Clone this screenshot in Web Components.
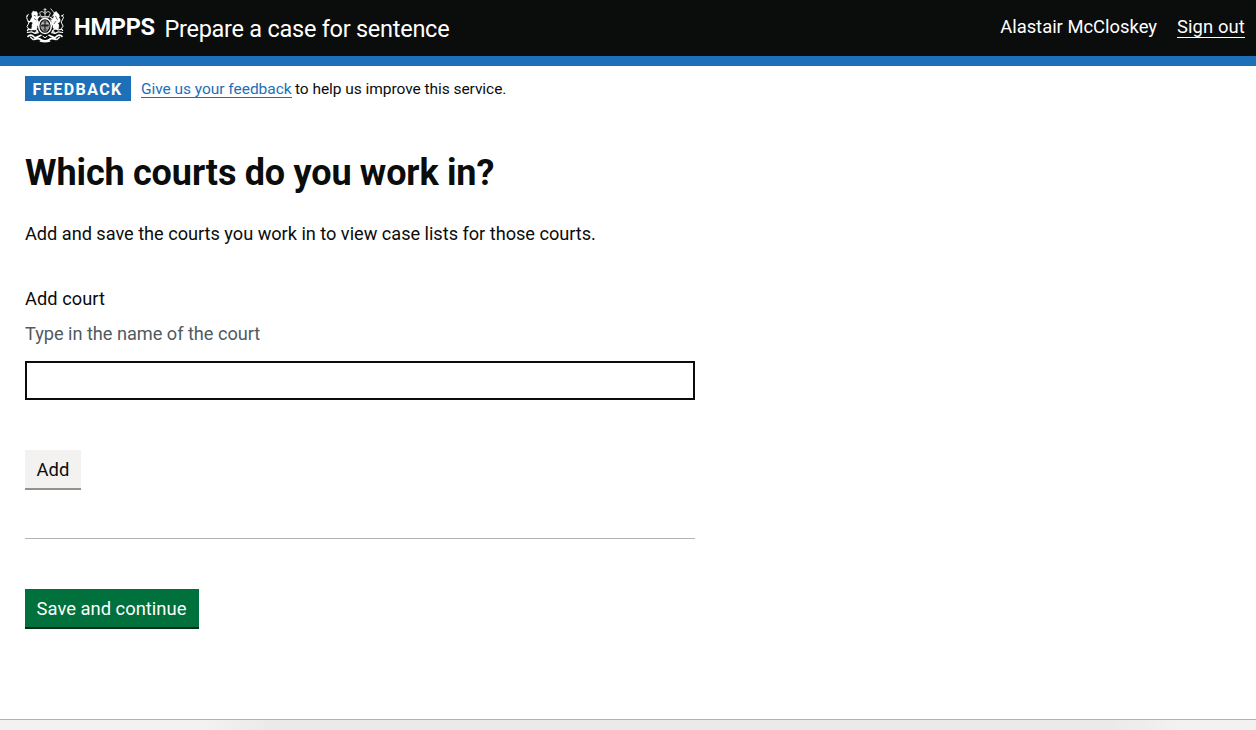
<!DOCTYPE html>
<html lang="en">
<head>
<meta charset="utf-8">
<title>Prepare a case for sentence</title>
<style>
  html, body { margin: 0; height: 100%; }
  body { background: #fff; color: #0b0c0c; font-family: Roboto, "Noto Sans", sans-serif; overflow: hidden; }
</style>
</head>
<body>
<court-page>
  <service-header slot="header" organisation="HMPPS" service="Prepare a case for sentence" user="Alastair McCloskey"></service-header>
  <phase-banner slot="banner" tag="Feedback"></phase-banner>
  <court-form></court-form>
  <page-footer slot="footer"></page-footer>
</court-page>

<script>
const define = (name, markup, ready) => customElements.define(name, class extends HTMLElement {
  connectedCallback() {
    if (this.shadowRoot) return;
    const template = document.createElement('template');
    template.innerHTML = markup;
    const root = this.attachShadow({ mode: 'open' });
    root.append(template.content.cloneNode(true));
    if (ready) ready(this, root);
  }
});

define('royal-crest', `
<style>:host { display: block; width: 40px; height: 35px; flex: none } svg { display: block }</style>
<svg width="40" height="35" viewBox="0 0 40 35" fill="none" stroke="#fff" stroke-linecap="round" stroke-linejoin="round" aria-hidden="true">
  <!-- crown -->
  <path d="M20 .5v3M18.8 1.7h2.4" stroke-width=".8"/>
  <path d="M16.2 8.4 14.6 5.2Q15.2 3.2 17.4 3.7Q19.4 4.2 20 5.8Q20.6 4.2 22.6 3.7Q24.8 3.2 25.4 5.2L23.8 8.4M20 3.6v4.4" stroke-width=".8"/>
  <path d="M16 8.9h8" stroke-width="1.2"/>
  <!-- shield within the garter -->
  <ellipse cx="20" cy="18" rx="6.3" ry="7.6" stroke-width="1.5"/>
  <ellipse cx="20" cy="18" rx="4.1" ry="5.3" stroke-width=".5" fill="#666"/>
  <path d="M20 13v10M16.4 17.6h7.2" stroke="#0b0c0c" stroke-width=".8"/>
  <path d="M17.4 15.2h1.5M21.2 15.2h1.5M17.6 20h1.2M21.2 20h1.2" stroke-width=".8"/>
  <!-- lion -->
  <path d="M6.8 5.2 8.2 3l1.7.8 1.5-.3 1.3 2-.4 1.8.8 2.4-.5 2.1 1.3 2.4-.2 2.4-1.5 1.5-.2 2.4-2.3 1.5-2.8-.2-.2-2.4 1.5-2.8-.8-2.1-2.1-1.5.8-2.4 1-1.4z" fill="#fff" stroke-width=".5"/>
  <path d="M6.3 12.8 4.3 14 3.2 13.3M12.5 10l1.8-1.8M9 15l-1.8 2.2 3.4 2.1-3.9 2.4-3.5-.6-.7 1.6M10.5 21l2.3 2.2-2.2 1.1" stroke-width="1.4"/>
  <path d="M3.3 20.6Q.7 18.4 3.2 16.3Q5.1 14.3 2.4 11.9Q.8 9.6 2.6 7.2M1.3 8.3 3.4 6.5" stroke-width="1"/>
  <path d="M9.2 7.4l1.4.6M9.4 10.7l1.8 1.2" stroke="#0b0c0c" stroke-width=".6"/>
  <!-- unicorn -->
  <path d="M25.8.8 29.3 5" stroke-width=".8"/>
  <path d="M28.1 7.2 29.3 4.5l2-1.1.8 1.3 1.6 1.3.9 2.3-.6 1.2 1.4 2.6-1 2.2-1.8 1.1 1.3 2.5-.4 2.9-2.7.9-2.8-1.8-.1-2.2-1.7-1.8.1-2.5 1.8-2.8.9-2.5-.7-.4-1.4.9z" fill="#fff" stroke-width=".4"/>
  <path d="M27.7 11.3 25.5 9.4M28 12.8 25.8 12M31.1 15l2.3 2-4 2.2 3.8 2.8 3.6-.8.8 1.3M29.5 21.1l-2.3 2.1 2.2 1.1" stroke-width="1.2"/>
  <path d="M36.7 20.4Q39.6 18 36.9 15.8Q35.3 13.8 37.4 11.9Q39.7 9.7 37.3 7.3M36.4 8 38.5 6.8" stroke-width="1"/>
  <path d="M30.6 8.2l1.8 3.5M31 13.3l-2 2.5" stroke="#0b0c0c" stroke-width=".6"/>
  <!-- flowers and motto scroll -->
  <path d="M2.4 24.5 6.5 23.8 10 25.4 13.3 24.6M37.6 24.5 33.5 23.8 30 25.4 26.7 24.6" stroke-width="1.2"/>
  <path d="M3 28.3Q5.3 25.8 8.2 28.2Q10.4 30.7 13.2 28.5L16 27.3M37 28.3Q34.7 25.8 31.8 28.2Q29.6 30.7 26.8 28.5L24 27.3" stroke-width="1.7"/>
  <path d="M5.5 29.2 8 31.5M34.5 29.2 32 31.5" stroke-width="1.2"/>
  <path d="M9 31.3Q14.3 29.6 16 31.8Q20 33.9 24 31.8Q25.7 29.6 31 31.3" stroke-width="1.9"/>
  <path d="M15.2 33.2Q20 34.6 24.8 33.2" stroke-width="1.3"/>
  <path d="M18 28.3 20 29.8l2-1.5" stroke-width="1"/>
</svg>`);

define('service-header', `
<style>
  :host { display: flex; box-sizing: border-box; height: 66px; padding: 0 11px 0 25px; background: #0b0c0c; color: #fff; border-bottom: 10px solid #1d70b8; justify-content: space-between; white-space: nowrap }
  .brand, nav { display: flex; align-items: flex-start }
  royal-crest { margin-top: 8px }
  .org { font: 700 23.6px/28px Roboto, sans-serif; letter-spacing: -.28px; margin: 13px 0 0 9px; width: 81px }
  .service { font-size: 23.5px; line-height: 30px; letter-spacing: -.26px; margin: 14px 0 0 9.4px }
  nav { font-size: 18.4px; line-height: 25px; gap: 20px; padding-top: 14px }
  a { color: inherit; text-decoration: none; border-bottom: 1px solid; line-height: 23px; height: 22px; width: 68px; margin-top: 1px; letter-spacing: .1px }
</style>
<div class="brand"><royal-crest></royal-crest><span class="org"></span><span class="service"></span></div>
<nav><span class="user"></span><a href="#">Sign out</a></nav>`, (host, root) => {
  root.querySelector('.org').textContent = host.getAttribute('organisation');
  root.querySelector('.service').textContent = host.getAttribute('service');
  root.querySelector('.user').textContent = host.getAttribute('user');
});

define('phase-banner', `
<style>
  :host { display: flex; align-items: flex-start; padding: 10px 25px 0; white-space: nowrap }
  strong { box-sizing: border-box; width: 106px; height: 25px; padding-left: 7.5px; background: #1d70b8; color: #fff; font: 700 16px/28px Roboto, sans-serif; letter-spacing: 1.45px; text-transform: uppercase }
  p { display: flex; gap: 3px; margin: 4px 0 0 10px; font-size: 15.5px; line-height: 19px }
  a { color: #1d70b8; text-decoration: none; border-bottom: 1px solid; line-height: 19px; height: 17px; width: 151px; letter-spacing: -.04px }
  span { letter-spacing: -.05px }
</style>
<strong></strong><p><a href="#">Give us your feedback</a><span>to help us improve this service.</span></p>`, (host, root) => {
  root.querySelector('strong').textContent = host.getAttribute('tag');
});

define('gds-button', `
<style>
  :host { display: block; width: fit-content }
  button { display: block; box-sizing: border-box; height: 38px; margin: 0 0 2px; padding: 1px 11.6px 0; border: 0; border-radius: 0; background: #00703c; color: #fff; box-shadow: 0 2px 0 #002d18; font: 18.4px/37px Roboto, sans-serif; white-space: nowrap; width: 174px; text-align: left }
  :host([secondary]) button { background: #f3f2f1; color: #0b0c0c; box-shadow: 0 2px 0 #929191; width: 56px }
</style>
<button type="button"><slot></slot></button>`);

define('court-field', `
<style>
  :host { display: block; font-size: 18.2px; line-height: 25px }
  label, .hint { display: block }
  label { letter-spacing: .08px }
  .hint { margin: 10px 0 15px; color: #505a5f; letter-spacing: -.03px }
  input { display: block; box-sizing: border-box; width: 100%; height: 39px; margin: 0; padding: 5px; border: 2px solid #0b0c0c; border-radius: 0; background: #fff; font: inherit }
</style>
<label for="court"></label><div class="hint"></div><input id="court" type="text">`, (host, root) => {
  root.querySelector('label').textContent = host.getAttribute('label');
  root.querySelector('.hint').textContent = host.getAttribute('hint');
});

define('court-form', `
<style>
  :host { display: block; width: 670px }
  h1 { margin: 0; font: 700 36px/40px Roboto, sans-serif; letter-spacing: -.1px; word-spacing: -.5px; white-space: nowrap }
  p { margin: 28px 0 40px; font-size: 18.2px; line-height: 25px; letter-spacing: -.03px; white-space: nowrap }
  gds-button { margin-top: 50px }
  hr { margin: 50px 0 0; border: 0; height: 1px; background: #b1b4b6 }
</style>
<h1>Which courts do you work in?</h1>
<p>Add and save the courts you work in to view case lists for those courts.</p>
<court-field label="Add court" hint="Type in the name of the court"></court-field>
<gds-button secondary>Add</gds-button>
<hr>
<gds-button>Save and continue</gds-button>`);

define('page-footer', `
<style>
  :host { display: block; box-sizing: border-box; height: 11px; border-top: 1px solid #b1b4b6; background: linear-gradient(90deg, #f3f2f1 205px, #ebeae9 270px, #ebeae9 1110px, #f3f2f1 1180px) }
</style>`);

define('court-page', `
<style>
  :host { display: flex; flex-direction: column; height: 730px; overflow: hidden }
  main { flex: 1; padding: 52px 25px 0 }
</style>
<slot name="header"></slot><slot name="banner"></slot><main><slot></slot></main><slot name="footer"></slot>`);
</script>
</body>
</html>
